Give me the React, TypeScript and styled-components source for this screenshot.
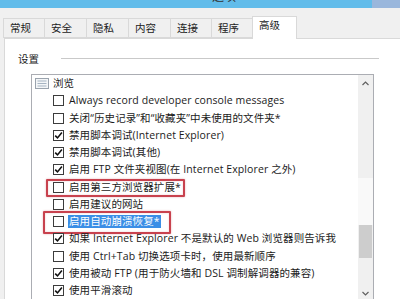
import React from 'react';
import styled, { createGlobalStyle } from 'styled-components';

const GlobalStyle = createGlobalStyle`
  html, body { margin: 0; padding: 0; background: #f0f0f0; overflow: hidden; }
  body { font-family: "Open Sans", "Noto Sans CJK SC", sans-serif; }
`;

const FONT = `"Open Sans", "Noto Sans CJK SC", sans-serif`;

const Window = styled.div`
  width: 400px;
  height: 299px;
  overflow: hidden;
  display: flex;
  flex-direction: column;
  background: #f0f0f0;
  font-family: ${FONT};
  color: #1b1b1b;
`;

const TitleBar = styled.div`
  height: 8px;
  flex: none;
  background: #62bcea;
  display: flex;
  justify-content: flex-end;
  overflow: hidden;
`;

const TitleText = styled.span`
  font-size: 12px;
  line-height: 14px;
  margin-top: -10px;
  margin-right: 136px;
  color: #333;
`;

const CloseArea = styled.div`
  width: 28px;
  height: 8px;
  background: #9ab7dc;
`;

const TabStrip = styled.div`
  height: 30px;
  flex: none;
  display: flex;
  align-items: flex-end;
  padding-left: 4px;
  position: relative;
  z-index: 1;
`;

const Tab = styled.div<{ $active?: boolean; $w: number }>`
  box-sizing: border-box;
  width: ${p => p.$w}px;
  height: ${p => (p.$active ? 23 : 20)}px;
  margin-bottom: ${p => (p.$active ? -1 : 0)}px;
  background: ${p => (p.$active ? '#ffffff' : '#f0f0f0')};
  border: 1px solid #d9d9d9;
  border-bottom: ${p => (p.$active ? 'none' : '1px solid #d9d9d9')};
  margin-left: -1px;
  font-size: 10.5px;
  line-height: ${p => (p.$active ? 17 : 18)}px;
  padding-left: 6px;
  color: #222;
`;

const Panel = styled.div`
  flex: 1;
  margin-left: 4px;
  background: #ffffff;
  border-left: 1px solid #d9d9d9;
  border-top: 1px solid #d9d9d9;
  display: flex;
  flex-direction: column;
`;

const GroupHeader = styled.div`
  display: flex;
  align-items: center;
  height: 14px;
  margin-top: 12px;
  padding-left: 13px;
  font-size: 10.5px;
`;

const GroupLine = styled.div`
  width: 318px;
  height: 1px;
  background: #c9c9c9;
  margin-left: 22px;
`;

const ListBox = styled.div`
  margin-top: 9px;
  margin-left: 26px;
  width: 343px;
  height: 228px;
  box-sizing: border-box;
  border: 1px solid #abadb3;
  display: flex;
  flex: none;
`;

const List = styled.div`
  flex: 1;
  position: relative;
`;

const Row = styled.div<{ $indent: number }>`
  position: relative;
  height: 17.25px;
  display: flex;
  align-items: center;
  padding-left: ${p => p.$indent}px;
  font-size: 10.5px;
  letter-spacing: 0.1px;
  white-space: nowrap;
`;

const Box = styled.div`
  width: 11px;
  height: 11px;
  box-sizing: border-box;
  border: 1px solid #3c3c3c;
  background: #fff;
  margin-right: 5px;
  display: flex;
  align-items: center;
  justify-content: center;
  flex: none;
`;

const Label = styled.span<{ $selected?: boolean }>`
  padding: 0 1px;
  margin-left: -1px;
  line-height: 13px;
  background: ${p => (p.$selected ? '#3a8ee6' : 'transparent')};
  color: ${p => (p.$selected ? '#ffffff' : '#1b1b1b')};
`;

const HeaderIcon = styled.div`
  width: 14px;
  height: 11px;
  margin-right: 4px;
  flex: none;
`;

const Marker = styled.div<{ $left: number; $top: number; $w: number; $h: number }>`
  position: absolute;
  left: ${p => p.$left}px;
  top: ${p => p.$top}px;
  width: ${p => p.$w}px;
  height: ${p => p.$h}px;
  box-sizing: border-box;
  border: 2px solid #c8424e;
  border-radius: 1px;
  box-shadow: 0 0 2px rgba(200, 66, 78, 0.45), inset 0 0 2px rgba(200, 66, 78, 0.3);
  pointer-events: none;
`;

const ScrollBar = styled.div`
  width: 15px;
  flex: none;
  display: flex;
  flex-direction: column;
  background: linear-gradient(#f0f0f0 0, #f0f0f0 103px, #f9f9f9 103px, #f9f9f9 150px, #f0f0f0 150px);
`;

const ArrowButton = styled.div`
  height: 16px;
  display: flex;
  align-items: center;
  justify-content: center;
  flex: none;
`;

const Track = styled.div`
  flex: 1;
  display: flex;
  flex-direction: column;
  align-items: center;
`;

const Thumb = styled.div`
  width: 13px;
  height: 33px;
  background: #cdcdcd;
  margin-top: 134px;
`;

const Check = () => (
  <svg width="9" height="9" viewBox="0 0 9 9">
    <path d="M1.2 4.6 L3.5 6.9 L7.9 1.6" fill="none" stroke="#111" strokeWidth="1.6" />
  </svg>
);

const ListIcon = () => (
  <svg width="14" height="11" viewBox="0 0 14 11">
    <rect x="0.5" y="0.5" width="13" height="10" fill="#f4f6f8" stroke="#9aa3ad" />
    <line x1="2.5" y1="3" x2="11.5" y2="3" stroke="#a6b4c2" />
    <line x1="2.5" y1="5.5" x2="11.5" y2="5.5" stroke="#a6b4c2" />
    <line x1="2.5" y1="8" x2="11.5" y2="8" stroke="#a6b4c2" />
  </svg>
);

const Chevron = ({ down }: { down?: boolean }) => (
  <svg width="7" height="5" viewBox="0 0 7 5">
    <path d={down ? 'M0.5 1 L3.5 4 L6.5 1' : 'M0.5 4 L3.5 1 L6.5 4'} fill="none" stroke="#606060" strokeWidth="1.2" />
  </svg>
);

type Item = {
  label: string;
  checked: boolean;
  selected?: boolean;
  marker?: { left: number; top: number; w: number; h: number };
};

const items: Item[] = [
  { label: 'Always record developer console messages', checked: false },
  { label: '关闭“历史记录”和“收藏夹”中未使用的文件夹*', checked: false },
  { label: '禁用脚本调试(Internet Explorer)', checked: true },
  { label: '禁用脚本调试(其他)', checked: true },
  { label: '启用 FTP 文件夹视图(在 Internet Explorer 之外)', checked: true },
  { label: '启用第三方浏览器扩展*', checked: false, marker: { left: -7, top: 0, w: 139, h: 18 } },
  { label: '启用建议的网站', checked: false },
  { label: '启用自动崩溃恢复*', checked: false, selected: true, marker: { left: -10, top: -2, w: 128, h: 23 } },
  { label: '如果 Internet Explorer 不是默认的 Web 浏览器则告诉我', checked: true },
  { label: '使用 Ctrl+Tab 切换选项卡时，使用最新顺序', checked: false },
  { label: '使用被动 FTP (用于防火墙和 DSL 调制解调器的兼容)', checked: true },
  { label: '使用平滑滚动', checked: true },
];

const tabs = [
  { label: '常规', w: 42 },
  { label: '安全', w: 43 },
  { label: '隐私', w: 43 },
  { label: '内容', w: 43 },
  { label: '连接', w: 42 },
  { label: '程序', w: 42 },
  { label: '高级', w: 45, active: true },
];

export default function App() {
  return (
    <>
      <GlobalStyle />
      <Window>
        <TitleBar>
          <TitleText>选项</TitleText>
          <CloseArea />
        </TitleBar>
        <TabStrip>
          {tabs.map(t => (
            <Tab key={t.label} $w={t.w} $active={t.active}>
              {t.label}
            </Tab>
          ))}
        </TabStrip>
        <Panel>
          <GroupHeader>
            设置
            <GroupLine />
          </GroupHeader>
          <ListBox>
            <List>
              <Row $indent={3}>
                <HeaderIcon>
                  <ListIcon />
                </HeaderIcon>
                <Label>浏览</Label>
              </Row>
              {items.map(it => (
                <Row key={it.label} $indent={21}>
                  <Box>{it.checked && <Check />}</Box>
                  <Label $selected={it.selected}>{it.label}</Label>
                  {it.marker && (
                    <Marker $left={21 + it.marker.left} $top={it.marker.top} $w={it.marker.w} $h={it.marker.h} />
                  )}
                </Row>
              ))}
            </List>
            <ScrollBar>
              <ArrowButton>
                <Chevron />
              </ArrowButton>
              <Track>
                <Thumb />
              </Track>
              <ArrowButton>
                <Chevron down />
              </ArrowButton>
            </ScrollBar>
          </ListBox>
        </Panel>
      </Window>
    </>
  );
}
